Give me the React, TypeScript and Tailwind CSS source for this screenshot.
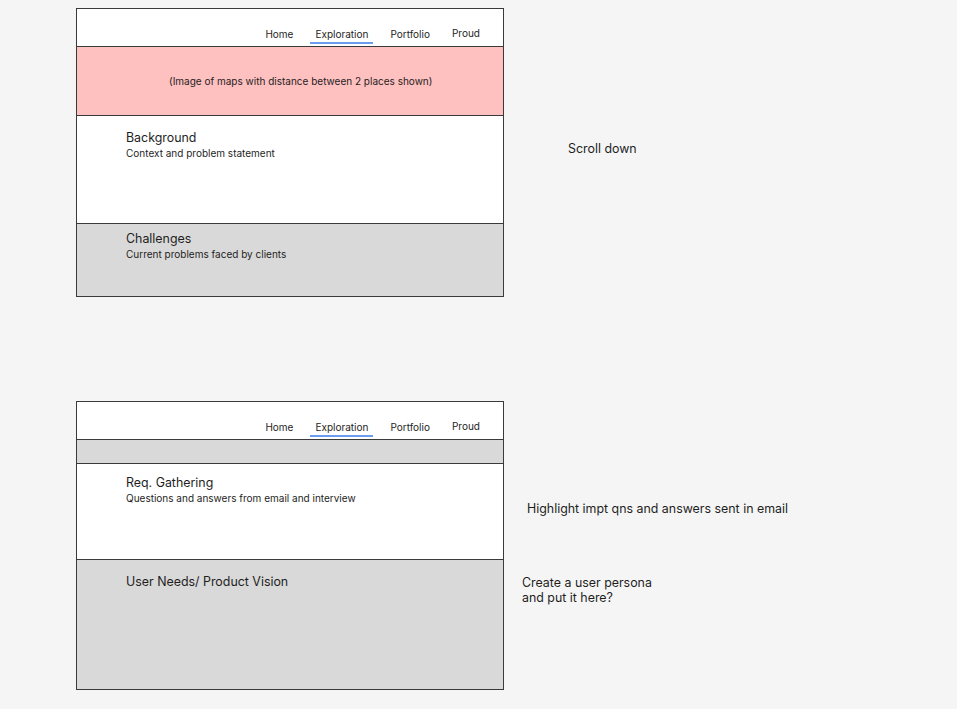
import React from "react";

const navItems = ["Home", "Exploration", "Portfolio", "Proud"];

function NavBar() {
  return (
    <div className="h-[38px] bg-white border-b border-[#3a3a3a] flex justify-end items-start pt-[19px] pr-[23px] gap-[22px]">
      {navItems.map((item) => (
        <span
          key={item}
          className={
            item === "Proud"
              ? "relative text-[10px] leading-[12px] text-[#1e1e1e] -translate-y-px"
              : "relative text-[10px] leading-[12px] text-[#1e1e1e]"
          }
        >
          {item}
          {item === "Exploration" && (
            <span className="absolute left-[-5px] right-[-5px] top-[14px] h-[2px] bg-[#6a9cf0]" />
          )}
        </span>
      ))}
    </div>
  );
}

function Section({
  title,
  subtitle,
  className,
}: {
  title: string;
  subtitle?: string;
  className: string;
}) {
  return (
    <div className={className}>
      <div className="text-[12.4px] leading-[16px] text-[#1e1e1e]">{title}</div>
      {subtitle && (
        <div className="mt-[1px] text-[10px] leading-[12px] text-[#1e1e1e]">{subtitle}</div>
      )}
    </div>
  );
}

export default function App() {
  return (
    <div
      className="w-[957px] h-[709px] overflow-hidden bg-[#f5f5f5] pl-[76px] pt-[8px] flex flex-col"
      style={{ fontFamily: "Inter, 'Noto Sans', sans-serif" }}
    >
      {/* Frame 1 */}
      <div className="flex items-start">
        <div className="w-[428px] h-[289px] border border-[#3a3a3a] flex flex-col">
          <NavBar />
          <div className="h-[68px] bg-[#ffc0c0] flex items-center pl-[92px]">
            <span className="text-[10px] leading-[12px] text-[#1e1e1e]">
              (Image of maps with distance between 2 places shown)
            </span>
          </div>
          <Section
            title="Background"
            subtitle="Context and problem statement"
            className="h-[108px] bg-white border-t border-[#3a3a3a] pl-[49px] pt-[14px]"
          />
          <Section
            title="Challenges"
            subtitle="Current problems faced by clients"
            className="flex-1 bg-[#d9d9d9] border-t border-[#3a3a3a] pl-[49px] pt-[7px]"
          />
        </div>
        <div className="ml-[64px] mt-[133px] text-[12.4px] leading-[15px] text-[#1e1e1e]">
          Scroll down
        </div>
      </div>

      {/* Frame 2 */}
      <div className="flex items-start mt-[104px]">
        <div className="w-[428px] h-[289px] border border-[#3a3a3a] flex flex-col">
          <NavBar />
          <div className="h-[23px] bg-[#d9d9d9]" />
          <Section
            title="Req. Gathering"
            subtitle="Questions and answers from email and interview"
            className="h-[96px] bg-white border-t border-[#3a3a3a] pl-[49px] pt-[11px]"
          />
          <Section
            title="User Needs/ Product Vision"
            className="flex-1 bg-[#d9d9d9] border-t border-[#3a3a3a] pl-[49px] pt-[14px]"
          />
        </div>
        <div className="ml-[18px] flex flex-col text-[12.4px] leading-[15px] text-[#1e1e1e]">
          <div className="mt-[100px] pl-[5px]">Highlight impt qns and answers sent in email</div>
          <div className="mt-[59px]">
            Create a user persona
            <br />
            and put it here?
          </div>
        </div>
      </div>
    </div>
  );
}
